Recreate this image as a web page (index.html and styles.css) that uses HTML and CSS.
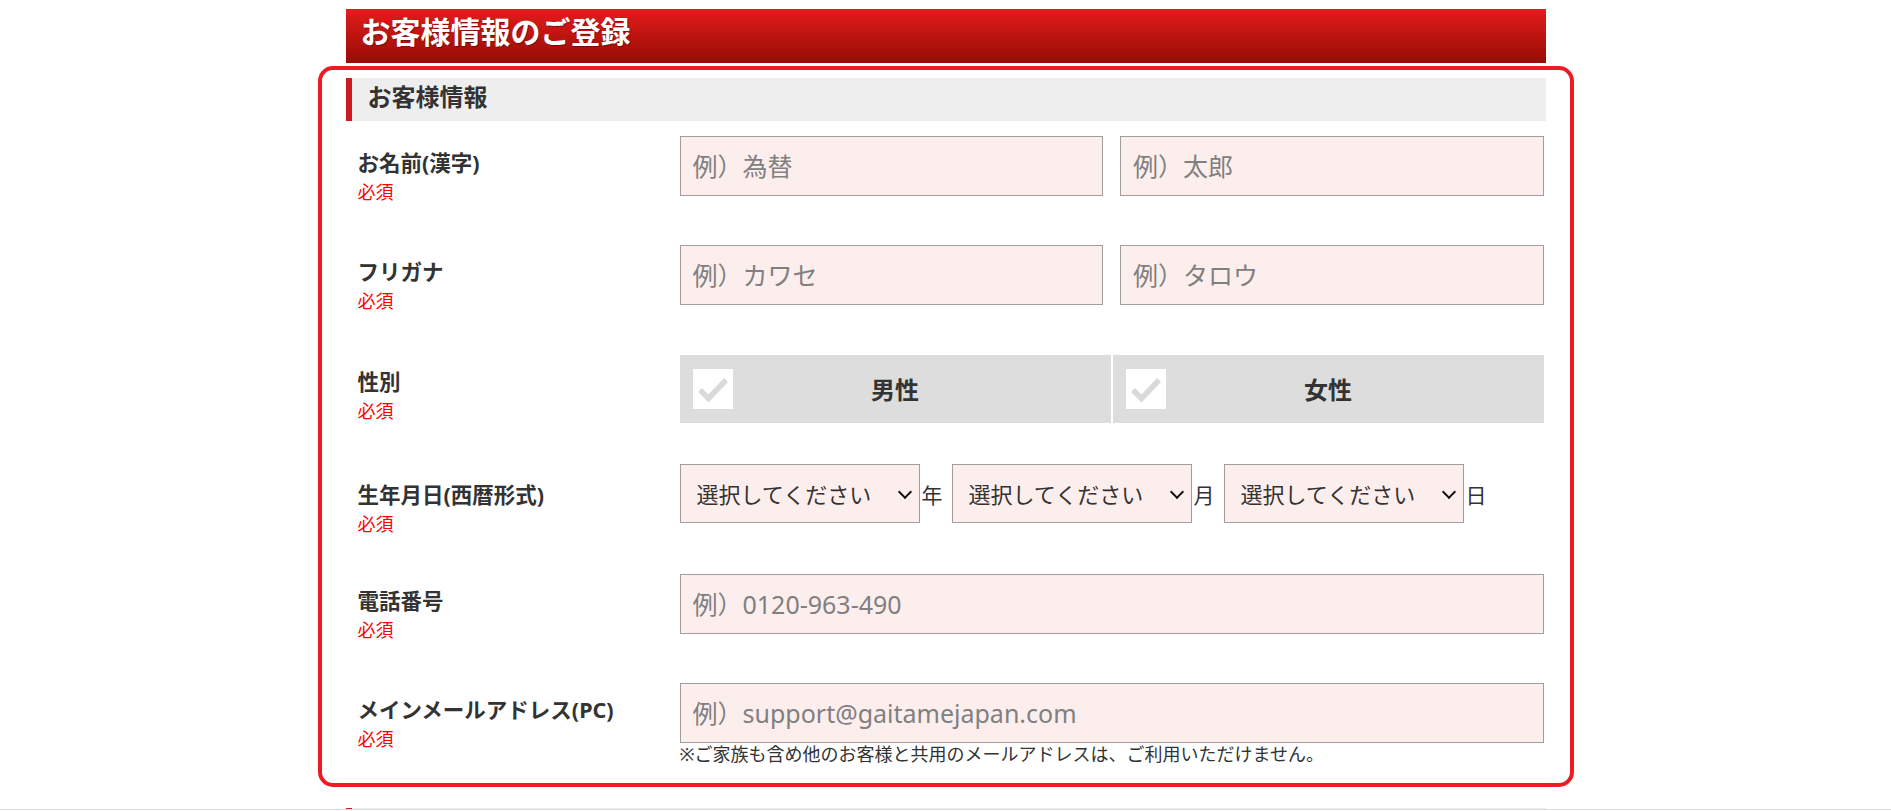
FILE: index.html
```html
<!DOCTYPE html>
<html lang="ja">
<head>
    <meta charset="UTF-8">
    <meta name="viewport" content="width=device-width, initial-scale=1.0">
    <title>お客様情報のご登録</title>
    <link rel="stylesheet" href="styles.css">
</head>
<body>
    <h1 class="page-title">お客様情報のご登録</h1>

    <form class="form-box">
        <h2 class="sec-title">お客様情報</h2>

        <div class="row">
            <div class="label">
                <div class="label-name">お名前(漢字)</div>
                <div class="req">必須</div>
            </div>
            <div class="field two">
                <input type="text" class="text-input" placeholder="例）為替">
                <input type="text" class="text-input" placeholder="例）太郎">
            </div>
        </div>

        <div class="row">
            <div class="label">
                <div class="label-name">フリガナ</div>
                <div class="req">必須</div>
            </div>
            <div class="field two">
                <input type="text" class="text-input" placeholder="例）カワセ">
                <input type="text" class="text-input" placeholder="例）タロウ">
            </div>
        </div>

        <div class="row">
            <div class="label">
                <div class="label-name">性別</div>
                <div class="req">必須</div>
            </div>
            <div class="field gender">
                <label class="gender-item">
                    <input type="radio" name="gender" value="male">
                    <span class="check">
                        <svg width="40" height="40" viewBox="0 0 40 40"><polyline points="7,21 15.5,29.5 33,11" fill="none" stroke="#d9d9d9" stroke-width="5.5"/></svg>
                    </span>
                    <span>男性</span>
                </label>
                <label class="gender-item">
                    <input type="radio" name="gender" value="female">
                    <span class="check">
                        <svg width="40" height="40" viewBox="0 0 40 40"><polyline points="7,21 15.5,29.5 33,11" fill="none" stroke="#d9d9d9" stroke-width="5.5"/></svg>
                    </span>
                    <span>女性</span>
                </label>
            </div>
        </div>

        <div class="row row-birth">
            <div class="label">
                <div class="label-name">生年月日(西暦形式)</div>
                <div class="req">必須</div>
            </div>
            <div class="field date">
                <span class="sel-wrap">
                    <select class="sel">
                        <option>選択してください</option>
                        <option>1990</option>
                        <option>1991</option>
                    </select>
                </span><span class="unit">年</span>
                <span class="sel-wrap">
                    <select class="sel">
                        <option>選択してください</option>
                        <option>1</option>
                        <option>2</option>
                    </select>
                </span><span class="unit">月</span>
                <span class="sel-wrap">
                    <select class="sel">
                        <option>選択してください</option>
                        <option>1</option>
                        <option>2</option>
                    </select>
                </span><span class="unit">日</span>
            </div>
        </div>

        <div class="row">
            <div class="label">
                <div class="label-name">電話番号</div>
                <div class="req">必須</div>
            </div>
            <div class="field">
                <input type="tel" class="text-input full" placeholder="例）0120-963-490">
            </div>
        </div>

        <div class="row">
            <div class="label">
                <div class="label-name">メインメールアドレス(PC)</div>
                <div class="req">必須</div>
            </div>
            <div class="field">
                <input type="email" class="text-input full" placeholder="例）support@gaitamejapan.com">
                <p class="note">※ご家族も含め他のお客様と共用のメールアドレスは、ご利用いただけません。</p>
            </div>
        </div>
    </form>

    <div class="next-sec">
        <div class="sec-title"></div>
    </div>

    <div class="bottom-bar"></div>
</body>
</html>
```

FILE: styles.css
```css
*{
    box-sizing: border-box;
}
body{
    margin: 0;
    font-family: "Noto Sans", "Noto Sans CJK JP", sans-serif;
    color: #333;
    background: #fff;
}
.page-title{
    width: 1200px;
    height: 54px;
    margin: 9px auto 0;
    padding-left: 15px;
    background: linear-gradient(#e41c1c, #960c04);
    color: #fff;
    font-size: 30px;
    font-weight: bold;
    line-height: 46px;
    text-shadow: 1px 1px 1px rgba(0, 0, 0, .35);
}
.form-box{
    width: 1256px;
    margin: 3px auto 0;
    padding: 8px 24px 6px;
    border: 4px solid #ed1c24;
    border-radius: 15px;
}
.sec-title{
    height: 43px;
    margin: 0;
    padding-left: 16px;
    border-left: 6px solid #cc1a20;
    background: #eee;
    font-size: 24px;
    font-weight: bold;
    line-height: 37px;
}
.row{
    display: grid;
    grid-template-columns: 334px 1fr;
    height: 109.4px;
    padding-top: 15px;
}
.label{
    padding: 13px 0 0 12px;
}
.row-birth .label{
    padding-top: 17px;
}
.label-name{
    font-size: 21.5px;
    font-weight: bold;
    line-height: 28px;
}
.req{
    margin-top: 3px;
    font-size: 18px;
    line-height: 24px;
    color: #f00;
}
.field{
    padding-right: 2px;
}
.two{
    display: flex;
    gap: 17px;
    align-items: flex-start;
}
.text-input{
    display: block;
    height: 60px;
    min-width: 0;
    flex: 1;
    padding: 0 12px;
    border: 1px solid #a09d9d;
    border-radius: 0;
    background: #fdeeee;
    font-family: inherit;
    font-size: 25px;
    color: #333;
    outline: none;
}
.text-input::placeholder{
    color: #808080;
}
.full{
    width: 100%;
}
.note{
    margin: 1px 0 0;
    font-size: 18px;
    line-height: 21px;
}

/* 性別 */
.gender{
    display: flex;
    gap: 2px;
    align-items: flex-start;
}
.gender-item{
    flex: 1;
    height: 68px;
    display: grid;
    grid-template-columns: 40px 1fr 40px;
    align-items: center;
    padding: 0 13px;
    background: #ddd;
    font-size: 24px;
    font-weight: bold;
    text-align: center;
    cursor: pointer;
}
.gender-item input{
    display: none;
}
.check{
    display: block;
    width: 40px;
    height: 40px;
    background: #fff;
}
.check svg{
    display: block;
}

/* 生年月日 */
.date{
    display: flex;
    align-items: center;
    align-self: start;
}
.sel-wrap{
    position: relative;
    display: block;
}
.sel-wrap::after{
    content: "";
    position: absolute;
    right: 10px;
    top: calc(50% - 7px);
    width: 8px;
    height: 8px;
    border-right: 2.5px solid #111;
    border-bottom: 2.5px solid #111;
    transform: rotate(45deg);
    pointer-events: none;
}
.sel{
    display: block;
    width: 240px;
    height: 59px;
    padding: 0 30px 0 16px;
    border: 1px solid #a09d9d;
    border-radius: 0;
    background-color: #fdeeee;
    font-family: inherit;
    font-size: 22px;
    color: #333;
    appearance: none;
    -webkit-appearance: none;
    outline: none;
}
.unit{
    margin: 0 9px 0 2px;
    font-size: 21px;
}

.next-sec{
    width: 1200px;
    margin: 21px auto 0;
}
.bottom-bar{
    position: fixed;
    left: 0;
    right: 0;
    bottom: 0;
    height: 2px;
    border-top: 1px solid #dcdcdc;
    background: #fff;
}
```
